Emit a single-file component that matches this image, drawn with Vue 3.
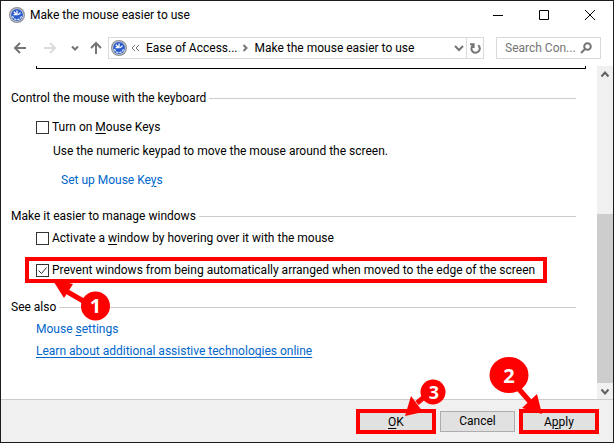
<template>
  <div class="window">
    <header class="title-bar">
      <svg class="app-icon" viewBox="0 0 16 16">
        <circle cx="8" cy="8" r="8" fill="#8f9196" />
        <circle cx="8" cy="8" r="6.8" fill="#c9ced8" />
        <circle cx="8" cy="8" r="5.9" fill="#2a5acb" />
        <path d="M3.5 9a4.6 4.6 0 0 0 9 0" fill="none" stroke="#dbe6fb" stroke-width="1.3" stroke-dasharray="2.4 .8" />
        <path d="M7.4 3.4h1.3v4.8H4.6V7h1.5L4.4 5.2l.9-.9 2.1 2z" fill="#fff" />
        <path d="M9.2 7.8l2.4-2.2" fill="none" stroke="#fff" stroke-width="1.2" />
      </svg>
      <span class="title">Make the mouse easier to use</span>
      <div class="window-controls">
        <button aria-label="Minimize">
          <svg viewBox="0 0 12 12"><path d="M1 6.5h10" /></svg>
        </button>
        <button aria-label="Maximize">
          <svg viewBox="0 0 12 12"><path d="M1.5 1.5h9v9h-9z" /></svg>
        </button>
        <button aria-label="Close">
          <svg viewBox="0 0 12 12"><path d="M1 1l10 10M11 1L1 11" /></svg>
        </button>
      </div>
    </header>

    <nav class="nav-bar">
      <button class="nav-btn back" aria-label="Back">
        <svg viewBox="0 0 14 14"><path d="M13 7H2M7 2L2 7l5 5" /></svg>
      </button>
      <button class="nav-btn forward" aria-label="Forward">
        <svg viewBox="0 0 14 14"><path d="M1 7h11M7 2l5 5-5 5" /></svg>
      </button>
      <button class="nav-btn recent" aria-label="Recent locations">
        <svg viewBox="0 0 8 8"><path d="M1 2.5l3 3 3-3" /></svg>
      </button>
      <button class="nav-btn up" aria-label="Up">
        <svg viewBox="0 0 14 14"><path d="M7 13V2M2 7l5-5 5 5" /></svg>
      </button>
      <div class="address">
        <svg class="app-icon" viewBox="0 0 16 16">
          <circle cx="8" cy="8" r="8" fill="#8f9196" />
          <circle cx="8" cy="8" r="6.8" fill="#c9ced8" />
          <circle cx="8" cy="8" r="5.9" fill="#2a5acb" />
          <path d="M3.5 9a4.6 4.6 0 0 0 9 0" fill="none" stroke="#dbe6fb" stroke-width="1.3" stroke-dasharray="2.4 .8" />
          <path d="M7.4 3.4h1.3v4.8H4.6V7h1.5L4.4 5.2l.9-.9 2.1 2z" fill="#fff" />
          <path d="M9.2 7.8l2.4-2.2" fill="none" stroke="#fff" stroke-width="1.2" />
        </svg>
        <svg class="crumb-more" viewBox="0 0 9 8"><path d="M4 1L1 4l3 3M8 1L5 4l3 3" /></svg>
        <button class="crumb">Ease of Access...</button>
        <svg class="crumb-arrow" viewBox="0 0 8 8"><path d="M2.5 1l3 3-3 3" /></svg>
        <button class="crumb">Make the mouse easier to use</button>
        <button class="drop" aria-label="Previous locations">
          <svg viewBox="0 0 10 10"><path d="M1 3l4 4 4-4" /></svg>
        </button>
        <button class="refresh" aria-label="Refresh">
          <svg viewBox="0 0 12 12"><path d="M9.2 3.2a4.2 4.2 0 1 1-5.6.4M1 2.2h3.6v3.9" /></svg>
        </button>
      </div>
      <div class="search">
        <input type="text" aria-label="Search" placeholder="Search Con..." />
        <svg viewBox="0 0 12 12"><circle cx="7.5" cy="4.5" r="3.3" /><path d="M5 7L1 11" /></svg>
      </div>
    </nav>

    <div class="body">
      <main class="content">
        <div class="panel-end"></div>

        <h2 class="heading first">Control the mouse with the keyboard</h2>
        <label class="option">
          <span class="check">
            <input v-model="mouseKeys" type="checkbox" />
            <svg v-if="mouseKeys" viewBox="0 0 13 13"><path d="M2.5 6.5l3 3 5-6" /></svg>
          </span>
          <span>Turn on <u>M</u>ouse Keys</span>
        </label>
        <p class="hint">Use the numeric keypad to move the mouse around the screen.</p>
        <a class="link set-up" href="#">Set up Mouse Ke<u>y</u>s</a>

        <h2 class="heading windows">Make it easier to manage windows</h2>
        <label class="option">
          <span class="check">
            <input v-model="hoverActivate" type="checkbox" />
            <svg v-if="hoverActivate" viewBox="0 0 13 13"><path d="M2.5 6.5l3 3 5-6" /></svg>
          </span>
          <span>Activate a <u>w</u>indow by hovering over it with the mouse</span>
        </label>
        <div class="marked-row">
          <label class="option">
            <span class="check">
              <input v-model="preventArrange" type="checkbox" />
              <svg v-if="preventArrange" viewBox="0 0 13 13"><path d="M2.5 6.5l3 3 5-6" /></svg>
            </span>
            <span>Prevent windows from being automatically arranged when moved to the edge of the screen</span>
          </label>
          <svg class="callout one" viewBox="0 0 60 44">
            <path d="M40 27L14 12" stroke="#f00" stroke-width="5" />
            <path d="M0 0L21 5L12 19z" />
            <circle cx="43.5" cy="27" r="14.5" />
            <text x="43.5" y="34">1</text>
          </svg>
        </div>

        <h2 class="heading also">See also</h2>
        <a class="link settings" href="#">Mouse <u>s</u>ettings</a>
        <a class="link learn" href="#">Learn about additional assistive technologies online</a>
      </main>

      <div class="scrollbar">
        <svg viewBox="0 0 16 16"><path d="M4.5 10.5l3.5-4 3.5 4" /></svg>
        <div class="track"></div>
        <div class="thumb"></div>
        <svg viewBox="0 0 16 16"><path d="M4.5 6.5l3.5 4 3.5-4" /></svg>
      </div>
    </div>

    <footer class="footer">
      <div class="action marked">
        <button><u>O</u>K</button>
        <svg class="callout three" viewBox="0 0 44 40">
          <path d="M25 14L13 24" stroke="#f00" stroke-width="5" />
          <path d="M1 37L7 17L19 33z" />
          <circle cx="29" cy="13" r="12.5" />
          <text x="30" y="20">3</text>
        </svg>
      </div>
      <div class="action">
        <button>Cancel</button>
      </div>
      <div class="action marked">
        <button>A<u>p</u>ply</button>
        <svg class="callout two" viewBox="0 0 56 60">
          <path d="M29 31L43 47" stroke="#f00" stroke-width="5" />
          <path d="M53 57L33 51L48 37z" />
          <ellipse cx="20" cy="18" rx="19.5" ry="18" />
          <text x="20" y="26">2</text>
        </svg>
      </div>
    </footer>
  </div>
</template>

<script setup>
import { ref } from 'vue';

const mouseKeys = ref(false);
const hoverActivate = ref(false);
const preventArrange = ref(true);
</script>

<style>
body {
  margin: 0;
}
</style>

<style scoped>
* {
  box-sizing: border-box;
}

.window {
  min-height: 100vh;
  display: flex;
  flex-direction: column;
  border: 1px solid #1b1b20;
  background: #fff;
  color: #000;
  font-family: Roboto, 'Open Sans', sans-serif;
  font-size: 12px;
  line-height: 20px;
  white-space: nowrap;
}

button {
  padding: 0;
  border: 0;
  background: none;
  color: inherit;
  font: inherit;
}

u {
  text-underline-offset: 2px;
}

svg {
  display: block;
  flex: none;
  fill: none;
}

.app-icon {
  width: 16px;
  height: 16px;
}

.title-bar {
  display: flex;
  align-items: center;
  height: 28px;
  padding-left: 8px;
}

.title {
  flex: 1;
  margin-left: 5px;
}

.window-controls {
  display: flex;
}

.window-controls button {
  display: grid;
  place-items: center;
  width: 46px;
  height: 28px;
}

.window-controls svg {
  width: 12px;
  height: 12px;
  stroke: #000;
}

.nav-bar {
  display: flex;
  align-items: center;
  height: 37px;
  padding: 0 12px;
}

.nav-btn svg {
  width: 14px;
  height: 14px;
  stroke: #757575;
  stroke-width: 2;
}

.nav-btn.back {
  margin-right: 16px;
}

.nav-btn.forward {
  margin-right: 14px;
}

.nav-btn.forward svg {
  stroke: #dcdcdc;
}

.nav-btn.recent {
  margin-right: 10px;
}

.nav-btn.recent svg {
  width: 8px;
  height: 8px;
}

.nav-btn.up {
  margin-right: 5px;
}

.address {
  flex: 1;
  display: flex;
  align-items: center;
  height: 22px;
  padding-left: 2px;
  border: 1px solid #d9d9d9;
}

.address svg {
  stroke: #757575;
}

.address .app-icon {
  stroke: none;
}

.crumb-more {
  width: 9px;
  height: 8px;
  margin: 0 6px 0 4px;
}

.crumb-arrow {
  width: 8px;
  height: 8px;
  margin: 0 6px 0 3px;
  stroke-width: 2;
}

.drop {
  margin: 0 2px 0 auto;
}

.drop svg {
  width: 10px;
  height: 10px;
  stroke-width: 2;
}

.refresh {
  display: grid;
  place-items: center;
  width: 17px;
  height: 20px;
  border-left: 1px solid #d9d9d9;
}

.refresh svg {
  width: 12px;
  height: 12px;
  stroke-width: 2;
}

.search {
  display: flex;
  align-items: center;
  width: 105px;
  height: 22px;
  margin-left: 12px;
  padding: 0 8px;
  border: 1px solid #d9d9d9;
}

.search input {
  flex: 1;
  min-width: 0;
  padding: 0;
  border: 0;
  outline: 0;
  background: none;
  font: inherit;
}

.search input::placeholder {
  color: #757575;
  opacity: 1;
}

.search svg {
  width: 12px;
  height: 12px;
  stroke: #757575;
  stroke-width: 2;
}

.body {
  flex: 1;
  display: flex;
}

.content {
  flex: 1;
  display: flex;
  flex-direction: column;
  align-items: flex-start;
  padding: 0 21px 0 10px;
}

/* Bottom edge of the box that is scrolled out of view */
.panel-end {
  align-self: stretch;
  height: 3px;
  margin: 0 -10px 0 25px;
  border: 1px solid #000;
  border-top: 0;
}

.heading {
  align-self: stretch;
  display: flex;
  align-items: center;
  margin: 0;
  font-size: inherit;
  font-weight: normal;
}

.heading::after {
  content: '';
  flex: 1;
  height: 1px;
  margin-left: 3px;
  background: #ccc;
}

.heading.first {
  margin: 19px 0 9px;
}

.heading.windows {
  margin: 16px 0 2px;
}

.heading.also {
  margin: 14px 0 2px;
}

.option {
  display: flex;
  align-items: center;
  gap: 3px;
  margin-left: 25px;
}

.check {
  position: relative;
  width: 13px;
  height: 13px;
}

.check input {
  appearance: none;
  display: block;
  width: 13px;
  height: 13px;
  margin: 0;
  border: 1px solid #333;
  background: #fff;
}

.check svg {
  position: absolute;
  inset: 0;
  stroke: #333;
  pointer-events: none;
}

.hint {
  margin: 4px 0 9px 42px;
}

.link {
  color: #0066cc;
  text-decoration: none;
}

.set-up {
  margin-left: 50px;
}

.settings,
.learn {
  margin-left: 25px;
}

.learn {
  margin-top: 2px;
  text-decoration: underline;
  text-underline-offset: 2px;
}

.marked-row {
  position: relative;
  margin: 9px 0 0 14px;
  padding-right: 8px;
  border: 4px solid #f00;
}

.marked-row .option {
  height: 18px;
  margin-left: 7px;
}

.callout {
  position: absolute;
  z-index: 1;
  fill: #f00;
  pointer-events: none;
}

.callout text {
  fill: #fff;
  font-family: 'Open Sans', sans-serif;
  font-weight: bold;
  font-size: 20px;
  text-anchor: middle;
}

.callout.one {
  left: 23px;
  top: 18px;
  width: 60px;
  height: 44px;
}

.callout.two {
  left: -34px;
  top: -56px;
  width: 56px;
  height: 60px;
}

.callout.three {
  left: 44px;
  top: -34px;
  width: 44px;
  height: 40px;
}

.callout.three text {
  font-size: 18px;
}

.scrollbar {
  display: flex;
  flex-direction: column;
  width: 16px;
  background: #f0f0f0;
}

.scrollbar svg {
  width: 16px;
  height: 16px;
  stroke: #606060;
  stroke-width: 2;
}

.track {
  flex: 132;
}

.thumb {
  flex: 168;
  background: #cdcdcd;
}

.footer {
  display: flex;
  justify-content: flex-end;
  align-items: center;
  gap: 4px;
  height: 43px;
  padding-right: 14px;
  border-top: 1px solid #ccc;
  background: #f0f0f0;
}

.action {
  position: relative;
}

.action button {
  display: block;
  width: 75px;
  height: 21px;
  border: 1px solid #adadad;
  background: #e1e1e1;
  line-height: 18px;
}

.action.marked {
  border: 4px solid #f00;
}

.action.marked button {
  width: 72px;
  height: 17px;
  border: 0;
}
</style>
